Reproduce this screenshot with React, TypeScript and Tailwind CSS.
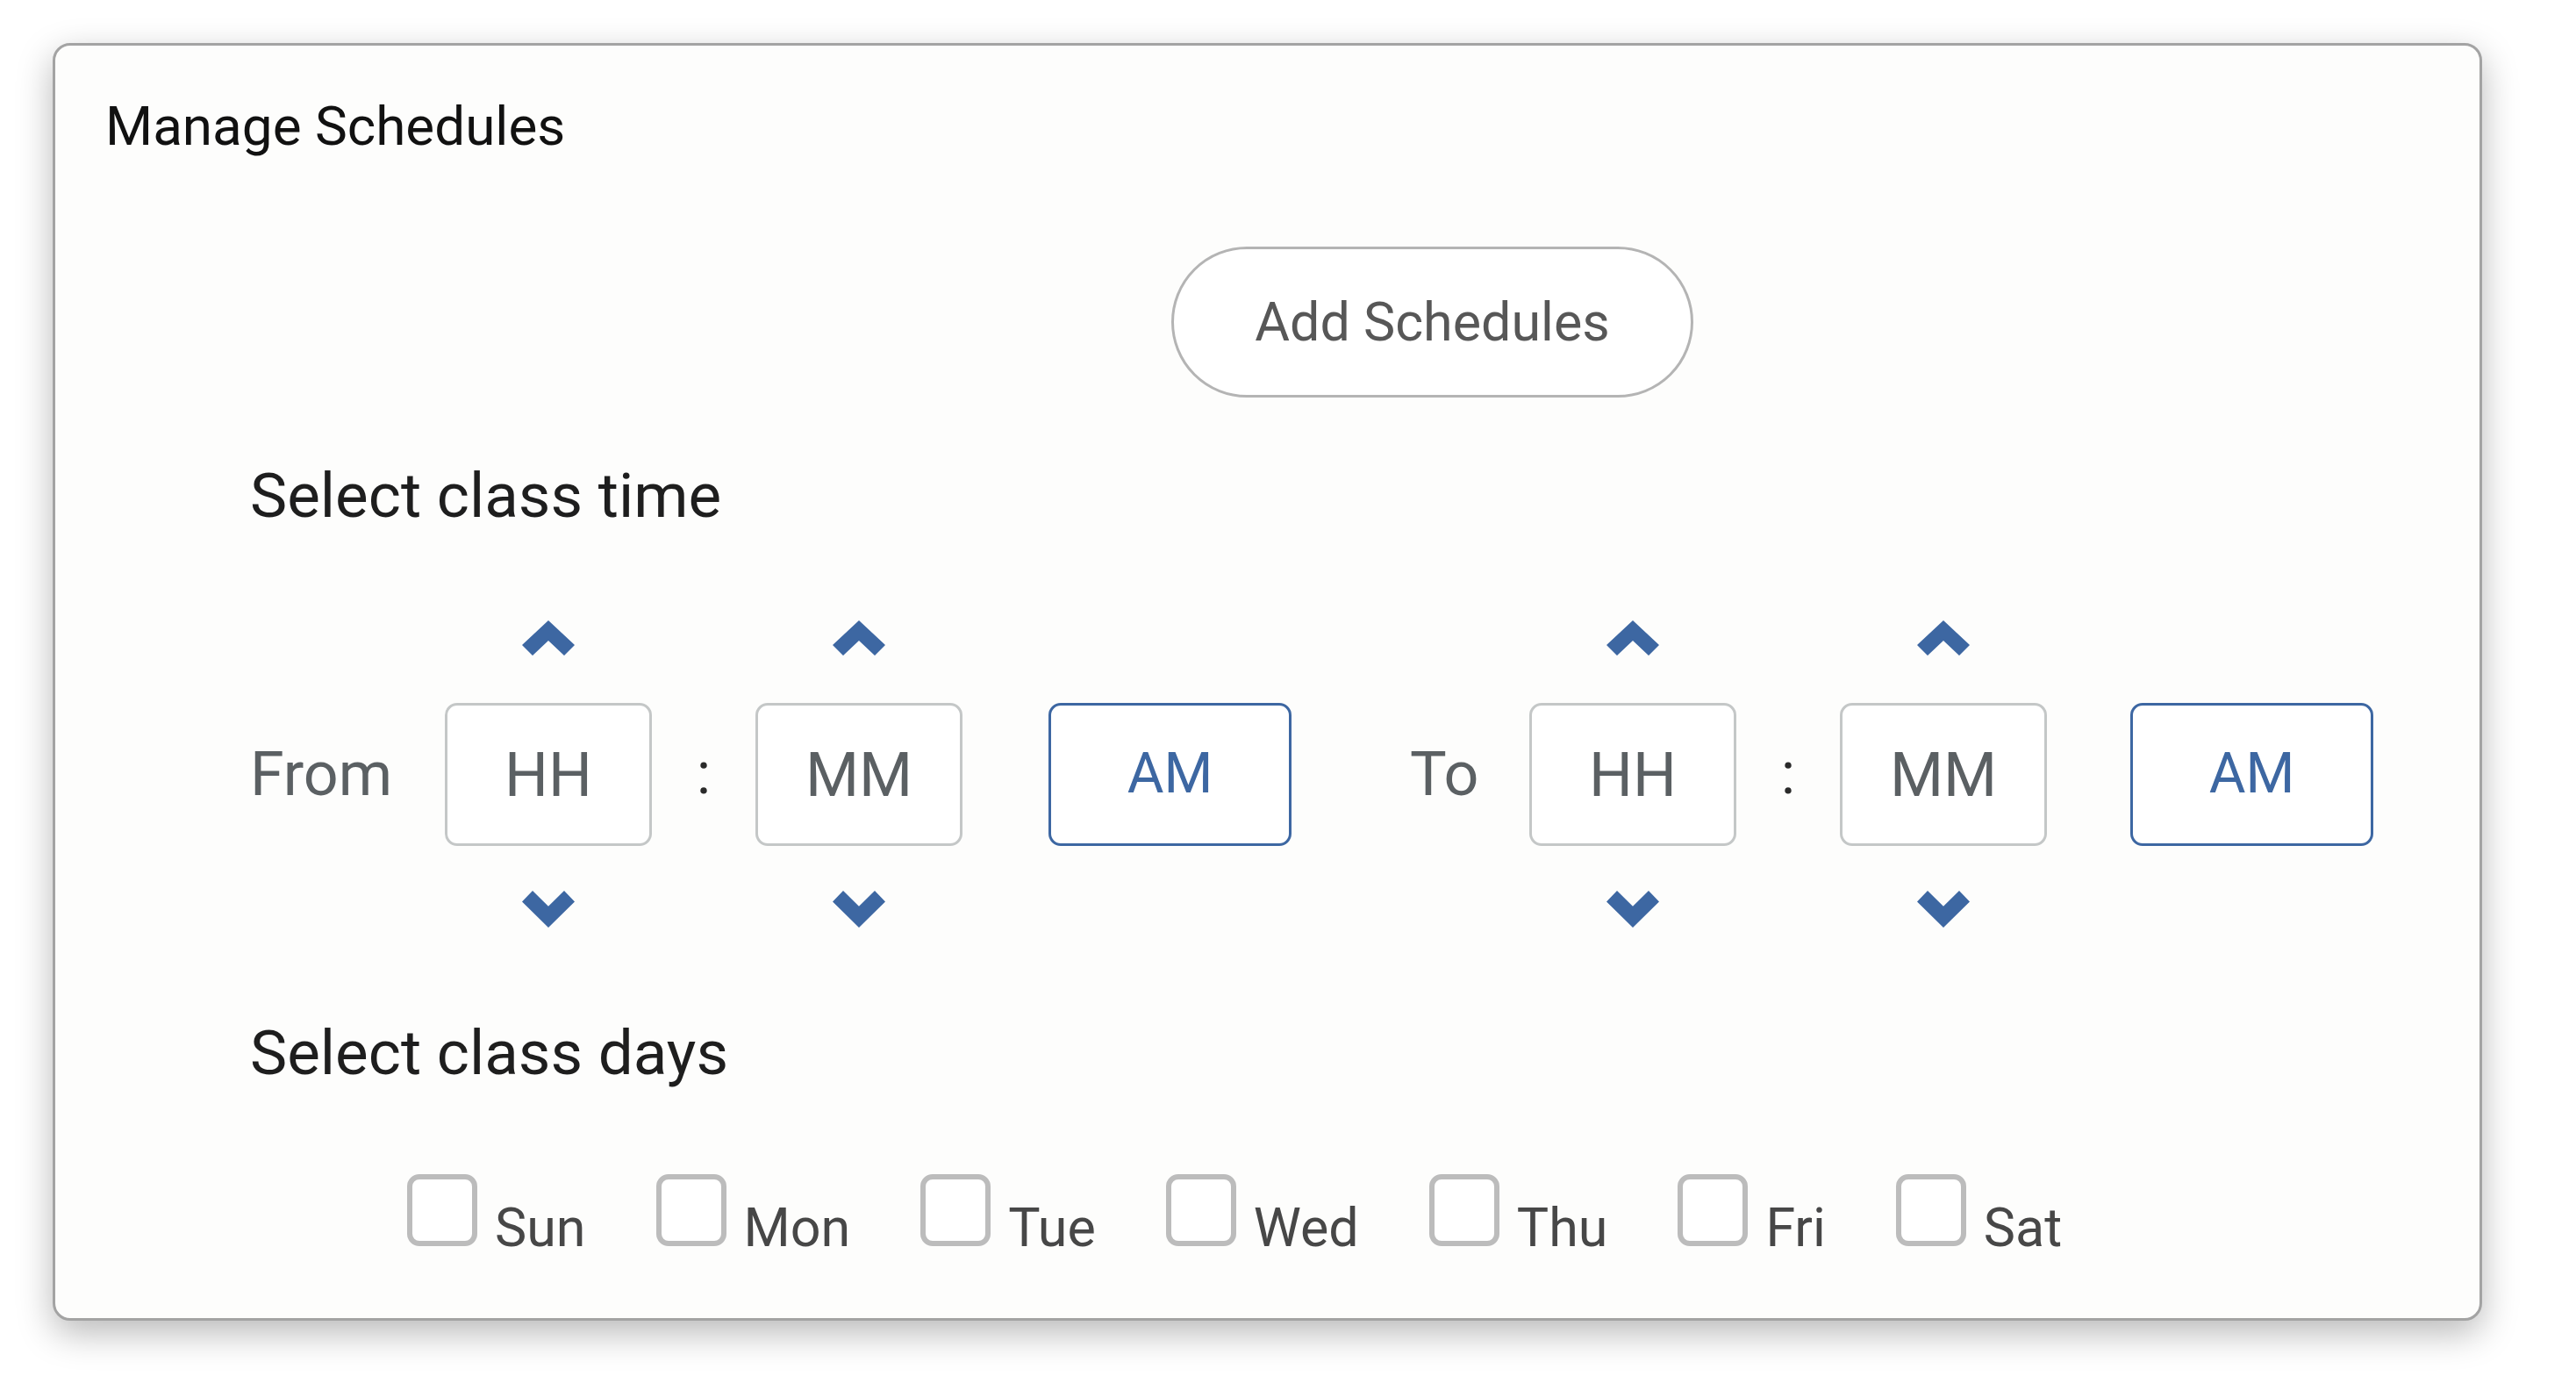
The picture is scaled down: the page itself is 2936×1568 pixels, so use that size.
import React from 'react';

const font = { fontFamily: 'Roboto, "Liberation Sans", Arial, sans-serif' };

const Chevron: React.FC<{ dir: 'up' | 'down' }> = ({ dir }) => (
  <svg
    viewBox="0 0 60 40"
    className={dir === 'up' ? 'w-[60px] h-[40px]' : 'w-[60px] h-[42px] rotate-180'}
    preserveAspectRatio="none"
  >
    <polygon points="30,0 0,28 12,40 30,23 48,40 60,28" fill="#3d67a2" />
  </svg>
);

const Spinner: React.FC<{ label: string }> = ({ label }) => (
  <div className="flex flex-col items-center w-[236px]">
    <Chevron dir="up" />
    <div className="mt-[54px] w-[236px] h-[163px] rounded-[14px] border-[3px] border-[#c4c7c7] bg-white flex items-center justify-center text-[70px] leading-none text-[#5b6063]">
      {label}
    </div>
    <div className="mt-[51px]">
      <Chevron dir="down" />
    </div>
  </div>
);

const Colon = () => (
  <div className="w-[118px] text-center text-[66px] leading-none text-[#2a2a2a]">:</div>
);

const AmBox = () => (
  <div className="w-[277px] h-[163px] rounded-[14px] border-[3px] border-[#3d67a2] bg-white flex items-center justify-center text-[64px] leading-none text-[#3d67a2]">
    AM
  </div>
);

const days = ['Sun', 'Mon', 'Tue', 'Wed', 'Thu', 'Fri', 'Sat'];

export default function App() {
  return (
    <div className="min-h-screen bg-white pt-[49px] pl-[60px]" style={font}>
      <div className="w-[2769px] h-[1456px] rounded-[20px] border-[3px] border-[#a3a3a3] bg-[#fdfdfc] shadow-[0_14px_40px_rgba(0,0,0,0.28)] flex flex-col items-start">
        <h1 className="mt-[61px] ml-[57px] text-[62px] leading-none text-[#111]">Manage Schedules</h1>

        <button className="mt-[106px] ml-[1272px] w-[595px] h-[172px] rounded-full border-[3px] border-[#b4b4b4] bg-white text-[61px] leading-none text-[#575757]">
          Add Schedules
        </button>

        <h2 className="mt-[76px] ml-[222px] text-[71px] leading-none text-[#1e1e1e]">Select class time</h2>

        <div className="mt-[107px] ml-[222px] flex items-center">
          <div className="w-[222px] text-[70px] leading-none text-[#5b6063]">From</div>
          <Spinner label="HH" />
          <Colon />
          <Spinner label="MM" />
          <div className="ml-[98px]">
            <AmBox />
          </div>
          <div className="ml-[135px] w-[136px] text-[70px] leading-none text-[#5b6063]">To</div>
          <Spinner label="HH" />
          <Colon />
          <Spinner label="MM" />
          <div className="ml-[95px]">
            <AmBox />
          </div>
        </div>

        <h2 className="mt-[107px] ml-[222px] text-[71px] leading-none text-[#1e1e1e]">Select class days</h2>

        <div className="mt-[103px] ml-[401px] flex items-end gap-[80px]">
          {days.map((d) => (
            <label key={d} className="flex items-end gap-[20px]">
              <span className="w-[80px] h-[82px] rounded-[14px] border-[6px] border-[#bcbcbc] bg-white" />
              <span className="text-[61px] leading-none text-[#474747] mb-[-10px]">{d}</span>
            </label>
          ))}
        </div>
      </div>
    </div>
  );
}
